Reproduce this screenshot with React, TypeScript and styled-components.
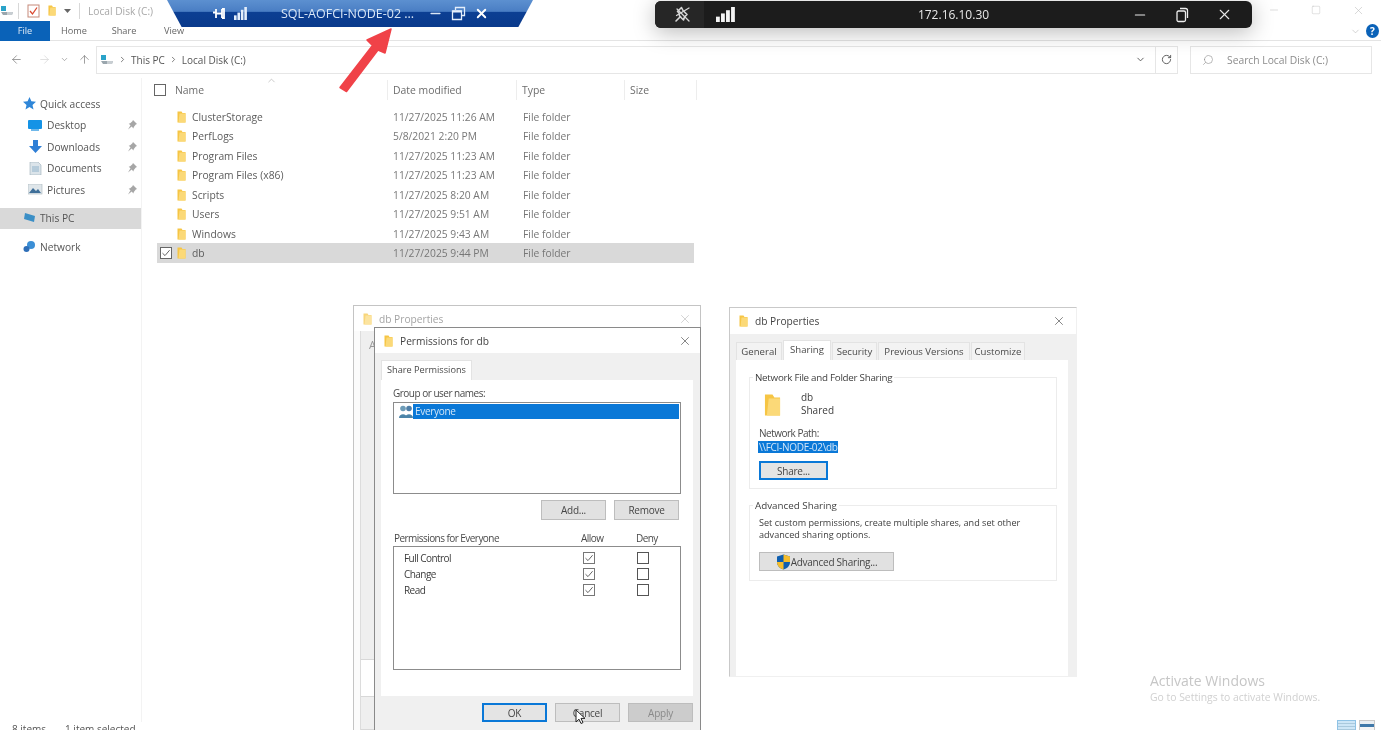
import React from 'react';
import styled, { createGlobalStyle } from 'styled-components';
import { ArrowLeft, ArrowRight, ArrowUp, ChevronDown, ChevronRight, ChevronUp, Minus, RotateCw, Search, Square, X } from 'lucide-react';

const GlobalStyle = createGlobalStyle`
  html, body { margin: 0; padding: 0; background: #fff; }
  * { box-sizing: border-box; }
`;

const UI_FONT = `'Open Sans', 'Noto Sans', sans-serif`;

const Page = styled.div`
  position: relative;
  width: 1381px;
  height: 730px;
  overflow: hidden;
  background: #fff;
  color: #4a4a4a;
  font-family: ${UI_FONT};
  font-size: 11px;
  display: flex;
  flex-direction: column;
  filter: blur(0.4px);
`;

const TitleBar = styled.div`
  height: 21px;
  display: flex;
  align-items: center;
  gap: 8px;
  color: #a8a8a8;
  font-size: 10.2px;
`;

const TitleDrive = styled.span`
  display: flex;
  margin-right: -4px;
`;

const VRule = styled.span`
  width: 1px;
  height: 16px;
  background: #d8d8d8;
`;

const Ribbon = styled.div`
  height: 20px;
  display: flex;
  align-items: center;
  border-bottom: 1px solid #e4e4e4;
  font-size: 9.2px;
  color: #666;
`;

const FileTab = styled.div`
  width: 50px;
  height: 20px;
  background: #0a62b8;
  color: #dfeaf6;
  display: flex;
  align-items: center;
  justify-content: center;
`;

const RibbonTabs = styled.div`
  display: flex;
  margin-left: -1px;
`;

const RibbonTab = styled.div`
  width: 50px;
  text-align: center;
`;

const AddressRow = styled.div`
  height: 37px;
  display: flex;
  align-items: center;
  padding: 4px 9px 4px 10px;
  color: #777;
`;

const NavButtons = styled.div`
  width: 86px;
  display: grid;
  grid-template-columns: 28px 22px 18px 1fr;
  align-items: center;
`;

const AddressBox = styled.div`
  width: 1082px;
  height: 28px;
  border: 1px solid #e6e6e6;
  display: flex;
  align-items: center;
  padding-left: 3px;
  gap: 4px;
  color: #555;
  font-size: 10px;
`;

const AddressSpacer = styled.div`
  flex: 1;
`;

const AddressEnd = styled.div`
  width: 22px;
  height: 100%;
  border-left: 1px solid #e6e6e6;
  display: flex;
  align-items: center;
  justify-content: center;
  margin-left: 5px;
`;

const SearchBox = styled.div`
  width: 182px;
  height: 28px;
  margin-left: 12px;
  border: 1px solid #e6e6e6;
  display: flex;
  align-items: center;
  gap: 13px;
  padding-left: 11px;
  color: #8c8c8c;
  font-size: 10.3px;
`;

const Body = styled.div`
  flex: 1;
  display: flex;
  min-height: 0;
`;

const Sidebar = styled.div`
  width: 142px;
  padding-top: 15px;
  border-right: 1px solid #f3f3f3;
`;

const NavItem = styled.div<{ $level?: number; $active?: boolean; $gap?: number }>`
  height: ${({ $active, $gap }) => ($active || $gap ? '21px' : '21.5px')};
  margin-top: ${({ $gap }) => $gap || 0}px;
  padding-left: ${({ $level }) => ($level ? 28 : 23)}px;
  padding-right: 4px;
  background: ${({ $active }) => ($active ? '#d9d9d9' : 'transparent')};
  display: flex;
  align-items: center;
  gap: 4px;
  font-size: 10.2px;
  color: #555;
`;

const NavLabel = styled.span`
  flex: 1;
`;

const Main = styled.div`
  flex: 1;
  padding: 2px 0 0 15px;
`;

const HeaderRow = styled.div`
  width: 540px;
  height: 20px;
  display: grid;
  grid-template-columns: 231px 129px 108px 72px;
  margin-bottom: 7.3px;
  color: #6d6d6d;
  font-size: 10.4px;
`;

const HeaderCell = styled.div<{ $first?: boolean }>`
  position: relative;
  display: flex;
  align-items: center;
  gap: 9px;
  padding-left: ${({ $first }) => ($first ? 0 : 5)}px;
  margin-left: ${({ $first }) => ($first ? -3 : 0)}px;
  border-right: 1px solid #ededed;
`;

const SortCaret = styled.span`
  position: absolute;
  left: 112px;
  top: -5px;
  color: #a8a8a8;
  display: flex;
`;

const Box = styled.span<{ $size?: number; $color?: string }>`
  width: ${({ $size }) => $size || 12}px;
  height: ${({ $size }) => $size || 12}px;
  border: 1px solid ${({ $color }) => $color || '#777'};
  background: #fff;
  display: inline-flex;
  align-items: center;
  justify-content: center;
  flex: none;
`;

const Row = styled.div<{ $selected?: boolean }>`
  width: 537px;
  height: 19.43px;
  display: grid;
  grid-template-columns: 20px 15px 201px 130px 1fr;
  align-items: center;
  background: ${({ $selected }) => ($selected ? '#d9d9d9' : 'transparent')};
  color: #5c5c5c;
  font-size: 10.3px;
`;

const RowCheck = styled.div`
  padding-left: 3px;
  display: flex;
`;

const Muted = styled.span`
  color: #777;
  font-size: 10.3px;
`;

const StatusBar = styled.div`
  height: 8px;
  display: flex;
  justify-content: space-between;
  padding: 0 6px 0 12px;
  font-size: 10px;
  color: #555;
`;

const StatusText = styled.div`
  display: flex;
  gap: 19px;
`;

const ViewIcons = styled.div`
  display: flex;
  gap: 3px;
  margin-top: -2px;
`;

const ViewIcon = styled.span<{ $on?: boolean }>`
  width: ${({ $on }) => ($on ? 19 : 16)}px;
  height: 14px;
  background: ${({ $on }) =>
    $on
      ? 'repeating-linear-gradient(#cde6f7 0 2px, #a9c9dd 2px 3px)'
      : 'linear-gradient(#e9eef2 0 3px, #3f78a8 3px 6px, #f4f4f4 6px)'};
  border: 1px solid ${({ $on }) => ($on ? '#8fc3e6' : '#c9c9c9')};
`;

/* overlays on top of the explorer */
const BlueBar = styled.div`
  position: absolute;
  left: 167px;
  top: 0;
  width: 366px;
  height: 27px;
  clip-path: polygon(0 0, 100% 0, 96% 100%, 4% 100%);
  background: linear-gradient(#5c90d0 0%, #4a7ec4 42%, #0c3f93 46%, #0a3a8c 100%);
  color: #d9e6f6;
  display: grid;
  grid-template-columns: 114px 137px 1fr;
  align-items: center;
  font-size: 12.5px;
`;

const BlueLeft = styled.div`
  display: flex;
  align-items: center;
  gap: 9px;
  padding-left: 46px;
`;

const BlueTitle = styled.div`
  white-space: nowrap;
`;

const BlueRight = styled.div`
  display: flex;
  align-items: center;
  gap: 8px;
  padding-left: 10px;
`;

const DarkBar = styled.div`
  position: absolute;
  left: 655px;
  top: 1px;
  width: 597px;
  height: 27px;
  border-radius: 6px;
  background: #1c1c1c;
  box-shadow: 0 4px 22px rgba(0, 0, 0, 0.28);
  color: #e8e8e8;
  display: grid;
  grid-template-columns: 1fr auto 1fr;
  align-items: center;
  font-size: 12px;
`;

const DarkLeft = styled.div`
  height: 100%;
  display: flex;
  align-items: center;
  gap: 12px;
`;

const PinCell = styled.div`
  width: 49px;
  height: 100%;
  padding-left: 6px;
  background: #262626;
  border-radius: 6px 0 0 6px;
  display: flex;
  align-items: center;
  justify-content: center;
`;

const DarkRight = styled.div`
  display: flex;
  align-items: center;
  justify-content: flex-end;
  gap: 26px;
  padding-right: 19px;
`;

const WindowControls = styled.div`
  position: absolute;
  right: 16px;
  top: 4px;
  display: flex;
  gap: 31px;
  color: #b9b9b9;
`;

const HelpGroup = styled.div`
  position: absolute;
  right: 2px;
  top: 24px;
  display: flex;
  align-items: center;
  gap: 5px;
  color: #b0b0b0;
`;

const HelpDot = styled.span`
  width: 13px;
  height: 14px;
  border-radius: 50%;
  background: #0a62b8;
  color: #fff;
  font-size: 10px;
  font-weight: 700;
  display: flex;
  align-items: center;
  justify-content: center;
`;

const ArrowMark = styled.svg`
  position: absolute;
  left: 334px;
  top: 24px;
`;

const Activation = styled.div`
  position: absolute;
  left: 1150px;
  top: 672px;
  color: #c6c6c6;
  font-size: 14px;
  line-height: 18px;
`;

const ActivationHint = styled.div`
  font-size: 10.4px;
  line-height: 15px;
  color: #d0d0d0;
`;

const Dialog = styled.div<{ $x: number; $y: number; $w: number; $h: number; $edge: string; $open?: boolean }>`
  position: absolute;
  left: ${({ $x }) => $x}px;
  top: ${({ $y }) => $y}px;
  width: ${({ $w }) => $w}px;
  height: ${({ $h }) => $h}px;
  border: 1px solid ${({ $edge }) => $edge};
  border-right-color: ${({ $open, $edge }) => ($open ? 'transparent' : $edge)};
  border-bottom-color: ${({ $open, $edge }) => ($open ? 'transparent' : $edge)};
  background: #f0f0f0;
  display: flex;
  flex-direction: column;
  color: #3c3c3c;
  font-size: 10px;
`;

const DialogTitle = styled.div<{ $h: number; $dim?: boolean; $pad?: number }>`
  height: ${({ $h }) => $h}px;
  flex: none;
  background: #fff;
  display: flex;
  align-items: center;
  gap: 7px;
  padding: 0 ${({ $pad }) => $pad || 8}px 0 9px;
  font-size: 10.2px;
  color: ${({ $dim }) => ($dim ? '#a4a4a4' : '#444')};
`;

const TitleText = styled.span`
  flex: 1;
`;

const BackStrip = styled.div`
  flex: 1;
  display: flex;
  padding-left: 6px;
  background: #fbfbfb;
`;

const BackPanel = styled.div`
  width: 15px;
  height: 100%;
  display: flex;
  flex-direction: column;
  border-left: 1px solid #dcdcdc;
`;

const BackPiece = styled.div<{ $h: number; $white?: boolean }>`
  height: ${({ $h }) => $h}px;
  flex: none;
  background: ${({ $white }) => ($white ? '#fff' : '#efefef')};
  border-bottom: 1px solid #d8d8d8;
  padding: 6px 0 0 8px;
  color: #999;
  font-size: 11px;
`;

const TabStrip = styled.div<{ $pad: number; $top: number }>`
  display: flex;
  align-items: flex-end;
  padding: ${({ $top }) => $top}px 0 0 ${({ $pad }) => $pad}px;
  flex: none;
`;

const Tab = styled.div<{ $w: number; $on?: boolean; $size?: number }>`
  width: ${({ $w }) => $w}px;
  height: ${({ $on }) => ($on ? 20 : 18)}px;
  margin-right: 1px;
  background: ${({ $on }) => ($on ? '#fff' : '#f3f3f3')};
  border: 1px solid #e3e3e3;
  border-bottom: none;
  display: flex;
  align-items: center;
  justify-content: center;
  font-size: ${({ $size }) => $size || 9.6}px;
  color: #4a4a4a;
  padding-bottom: ${({ $on }) => ($on ? 3 : 0)}px;
`;

const TabPanel = styled.div<{ $l: number; $r: number; $p: string; $h?: number }>`
  flex: ${({ $h }) => ($h ? 'none' : 1)};
  height: ${({ $h }) => ($h ? `${$h}px` : 'auto')};
  margin: 0 ${({ $r }) => $r}px 0 ${({ $l }) => $l}px;
  padding: ${({ $p }) => $p};
  background: #fff;
  display: flex;
  flex-direction: column;
  min-height: 0;
`;

const FieldLabel = styled.div<{ $m?: number; $top?: number; $track?: number }>`
  line-height: 12px;
  margin-top: ${({ $top }) => $top || 0}px;
  margin-bottom: ${({ $m }) => $m || 0}px;
  letter-spacing: ${({ $track }) => $track ?? -0.5}px;
  font-size: 10px;
  color: #4a4a4a;
`;

const ListBox = styled.div<{ $h: number }>`
  width: 288px;
  height: ${({ $h }) => $h}px;
  flex: none;
  border: 1px solid #8c8c8c;
  background: #fff;
`;

const ListRow = styled.div`
  display: flex;
  align-items: center;
  padding: 1px 0 0 5px;
`;

const ListSelection = styled.div`
  flex: 1;
  height: 15px;
  margin-right: 1px;
  padding-left: 2px;
  background: #0a78d7;
  color: #d3e6f8;
  line-height: 15px;
  letter-spacing: -0.3px;
`;

const ButtonRow = styled.div<{ $top: number }>`
  display: flex;
  justify-content: flex-end;
  gap: 8px;
  margin-top: ${({ $top }) => $top}px;
  padding-right: 3px;
`;

const Btn = styled.div<{ $w: number; $h?: number; $focus?: boolean; $off?: boolean }>`
  width: ${({ $w }) => $w}px;
  height: ${({ $h }) => $h || 19}px;
  flex: none;
  background: ${({ $off, $focus }) => ($off ? '#cccccc' : $focus ? '#e4e4e4' : '#e1e1e1')};
  border: ${({ $focus }) => ($focus ? '2px solid #0a78d7' : '1px solid #bdbdbd')};
  color: ${({ $off }) => ($off ? '#8a8a8a' : '#454545')};
  display: flex;
  align-items: center;
  justify-content: center;
  font-size: 10px;
  letter-spacing: -0.25px;
`;

const PermHead = styled.div`
  display: grid;
  grid-template-columns: 187px 55px 1fr;
  margin-top: 12px;
  margin-bottom: 2px;
  padding-left: 1px;
  line-height: 12px;
  letter-spacing: -0.55px;
  color: #4a4a4a;
`;

const PermBox = styled(ListBox)`
  padding: 3px 0 0 10px;
`;

const PermRow = styled.div`
  height: 16px;
  display: grid;
  grid-template-columns: 179px 54px 1fr;
  align-items: center;
  letter-spacing: -0.55px;
`;

const DialogButtons = styled.div`
  flex: none;
  height: 33px;
  display: flex;
  justify-content: flex-end;
  gap: 8px;
  padding: 7px 7px 0 0;
`;

const Cursor = styled.svg`
  position: absolute;
  left: 575px;
  top: 709px;
`;

const GroupBox = styled.div<{ $h: number; $m: number }>`
  position: relative;
  height: ${({ $h }) => $h}px;
  margin-bottom: ${({ $m }) => $m}px;
  flex: none;
  border: 1px solid #ececec;
  padding: 0 9px;
`;

const Legend = styled.div<{ $tight?: boolean }>`
  position: absolute;
  left: 3px;
  top: -7px;
  padding: 0 2px;
  background: #fff;
  line-height: 13px;
  font-size: 9.8px;
  letter-spacing: ${({ $tight }) => ($tight ? -0.27 : 0)}px;
  color: #3f3f3f;
`;

const ShareHead = styled.div`
  display: flex;
  gap: 20px;
  padding: 15px 0 0 5px;
  height: 48px;
`;

const ShareName = styled.div`
  line-height: 13px;
  margin-top: -2px;
  font-size: 10px;
`;

const PathSelect = styled.span`
  display: inline-block;
  height: 12px;
  margin-left: -1px;
  padding-left: 1px;
  line-height: 12px;
  background: #0a78d7;
  color: #d3e6f8;
  letter-spacing: -0.3px;
`;

const PathLine = styled.div`
  margin-bottom: 8px;
  font-size: 10px;
  display: flex;
`;

const Paragraph = styled.div`
  padding-top: 11px;
  margin-bottom: 11px;
  line-height: 12px;
  font-size: 9.1px;
`;

const Folder: React.FC<{ w?: number; h?: number; dim?: boolean }> = ({ w = 9, h = 12, dim }) => (
  <svg width={w} height={h} viewBox="0 0 9 12" style={{ opacity: dim ? 0.7 : 1, flex: 'none' }}>
    <path d="M0.500 0.500H4.500L5.500 2H8.500V11.500H0.500Z" fill="#f6c544" />
    <path d="M2.500 2.500H8.500V11.500H1.500Z" fill="#fbd978" />
  </svg>
);

const DriveIcon: React.FC = () => (
  <svg width="14" height="12" viewBox="0 0 14 12" style={{ flex: 'none' }}>
    <path d="M1 1h5v5H1z" fill="#2aa3c9" />
    <path d="M1 7h12l-1 3H3z" fill="#9aa6ad" />
    <path d="M7 7h6l-1 3H7z" fill="#c8ced2" />
  </svg>
);

const Signal: React.FC<{ w: number; h: number; color: string }> = ({ w, h, color }) => (
  <svg width={w} height={h} viewBox="0 0 14 14" preserveAspectRatio="none">
    <rect x="0" y="9" width="2.800" height="5" fill={color} />
    <rect x="3.700" y="6" width="2.800" height="8" fill={color} />
    <rect x="7.400" y="3" width="2.800" height="11" fill={color} />
    <rect x="11.100" y="0" width="2.800" height="14" fill={color} />
  </svg>
);

const SlashedPin: React.FC = () => (
  <svg width="17" height="17" viewBox="0 0 17 17" fill="none" stroke="#d6d6d6" strokeWidth="1.600" strokeLinecap="round" strokeLinejoin="round">
    <path d="M7.500 1.500 3.500 5.500 5 6.500 5.500 10 9.500 14 10.500 11 13 8.500 9 4.500Z" />
    <path d="M2 15 6.500 10.500" />
    <path d="M15 2 2.500 9.500M3 3 15 15" strokeWidth="1.300" />
  </svg>
);

const Tick: React.FC<{ color?: string }> = ({ color = '#666' }) => (
  <svg width="10" height="10" viewBox="0 0 10 10">
    <path d="M1.500 5.200 4 7.600 8.600 2.200" fill="none" stroke={color} strokeWidth="1" />
  </svg>
);

const Shield: React.FC = () => (
  <svg width="15" height="16" viewBox="0 0 15 16" style={{ flex: 'none' }}>
    <path d="M7.500 0.500 14 2.500V8c0 4-3 6.500-6.500 7.500C4 14.500 1 12 1 8V2.500Z" fill="#0f5fb0" />
    <path d="M7.500 0.500 14 2.500V8H7.500ZM7.500 8V15.500C4 14.500 1 12 1 8Z" fill="#f5bd2c" />
  </svg>
);

const navItems = [
  { label: 'Desktop', icon: <svg width="15" height="11" viewBox="0 0 15 11"><rect width="14" height="9" rx="1" fill="#1593e6" /><rect x="3" y="9" width="8" height="2" fill="#6fb8ea" /></svg> },
  { label: 'Downloads', icon: <svg width="15" height="13" viewBox="0 0 15 13"><path d="M5 0h5v6h4L7.500 13 1 6h4z" fill="#2f7fd6" /></svg> },
  { label: 'Documents', icon: <svg width="15" height="13" viewBox="0 0 15 13"><path d="M2 0h8l3 3v10H2z" fill="#dbe4ea" stroke="#9fb0ba" strokeWidth=".6" /><path d="M4 5h7M4 7h7M4 9h7" stroke="#7fa6c4" strokeWidth=".8" /></svg> },
  { label: 'Pictures', icon: <svg width="15" height="11" viewBox="0 0 15 11"><rect width="14" height="10" fill="#dfe6ea" stroke="#a9b5bb" strokeWidth=".6" /><path d="M1 9 5 4l3 3 2-2 3 4z" fill="#3f6f99" /></svg> },
];

const files = [
  { name: 'ClusterStorage', date: '11/27/2025 11:26 AM' },
  { name: 'PerfLogs', date: '5/8/2021 2:20 PM' },
  { name: 'Program Files', date: '11/27/2025 11:23 AM' },
  { name: 'Program Files (x86)', date: '11/27/2025 11:23 AM' },
  { name: 'Scripts', date: '11/27/2025 8:20 AM' },
  { name: 'Users', date: '11/27/2025 9:51 AM' },
  { name: 'Windows', date: '11/27/2025 9:43 AM' },
  { name: 'db', date: '11/27/2025 9:44 PM', selected: true },
];

const perms = ['Full Control', 'Change', 'Read'];

const sharingTabs = [
  { label: 'General', w: 46 },
  { label: 'Sharing', w: 48, on: true },
  { label: 'Security', w: 45 },
  { label: 'Previous Versions', w: 92 },
  { label: 'Customize', w: 54 },
];

const App: React.FC = () => (
  <Page>
    <GlobalStyle />
    <TitleBar>
      <TitleDrive><DriveIcon /></TitleDrive>
      <VRule />
      <svg width="13" height="14" viewBox="0 0 13 14"><rect x="1" y="1" width="11" height="12" fill="#fff" stroke="#c58a7a" /><path d="M3 7l2.500 3L10 3.500" fill="none" stroke="#d9482f" strokeWidth="1.300" /></svg>
      <Folder w={8} h={13} />
      <svg width="7" height="7" viewBox="0 0 7 7"><path d="M0 2h7L3.500 6z" fill="#666" /></svg>
      <VRule />
      <span>Local Disk (C:)</span>
    </TitleBar>
    <Ribbon>
      <FileTab>File</FileTab>
      <RibbonTabs>
        <RibbonTab>Home</RibbonTab>
        <RibbonTab>Share</RibbonTab>
        <RibbonTab>View</RibbonTab>
      </RibbonTabs>
    </Ribbon>
    <AddressRow>
      <NavButtons>
        <ArrowLeft size={13} strokeWidth={1.3} />
        <ArrowRight size={13} strokeWidth={1.3} color="#d4d4d4" />
        <ChevronDown size={9} strokeWidth={1.5} />
        <ArrowUp size={13} strokeWidth={1.3} />
      </NavButtons>
      <AddressBox>
        <DriveIcon />
        <ChevronRight size={9} />
        <span>This PC</span>
        <ChevronRight size={9} />
        <span>Local Disk (C:)</span>
        <AddressSpacer />
        <ChevronDown size={11} />
        <AddressEnd><RotateCw size={11} /></AddressEnd>
      </AddressBox>
      <SearchBox>
        <Search size={12} strokeWidth={1.2} style={{ transform: 'scaleX(-1)' }} />
        <span>Search Local Disk (C:)</span>
      </SearchBox>
    </AddressRow>
    <Body>
      <Sidebar>
        <NavItem>
          <svg width="13" height="13" viewBox="0 0 13 13"><path d="M6.500 0 8.400 4.300 13 4.800 9.500 7.900 10.500 12.500 6.500 10.100 2.500 12.500 3.500 7.900 0 4.800 4.600 4.300z" fill="#2f86d8" /></svg>
          <NavLabel>Quick access</NavLabel>
        </NavItem>
        {navItems.map((n) => (
          <NavItem key={n.label} $level={1}>
            {n.icon}
            <NavLabel>{n.label}</NavLabel>
            <svg width="10" height="10" viewBox="0 0 10 10"><path d="M6 0 10 4 8.800 4.600 6.800 7 6.400 8.400 4.700 6.500 1 9.500 3.500 5.300 1.700 3.700 3.200 3.300 5.400 1.200z" fill="#a6a6a6" /></svg>
          </NavItem>
        ))}
        <NavItem $active $gap={7}>
          <svg width="13" height="10" viewBox="0 0 13 10"><path d="M2 0 12 3 11 9 1 6z" fill="#3b8fc6" /></svg>
          <NavLabel>This PC</NavLabel>
        </NavItem>
        <NavItem $gap={8}>
          <svg width="13" height="12" viewBox="0 0 13 12"><circle cx="8" cy="4" r="4" fill="#3b8fd6" /><circle cx="3.500" cy="8" r="3" fill="#2f6fb8" /></svg>
          <NavLabel>Network</NavLabel>
        </NavItem>
      </Sidebar>
      <Main>
        <HeaderRow>
          <HeaderCell $first>
            <Box $color="#666" />
            <span>Name</span>
            <SortCaret><ChevronUp size={11} strokeWidth={1.3} /></SortCaret>
          </HeaderCell>
          <HeaderCell>Date modified</HeaderCell>
          <HeaderCell>Type</HeaderCell>
          <HeaderCell>Size</HeaderCell>
        </HeaderRow>
        {files.map((f) => (
          <Row key={f.name} $selected={f.selected}>
            <RowCheck>{f.selected && <Box $color="#666"><Tick /></Box>}</RowCheck>
            <Folder />
            <span>{f.name}</span>
            <Muted>{f.date}</Muted>
            <Muted>File folder</Muted>
          </Row>
        ))}
      </Main>
    </Body>
    <StatusBar>
      <StatusText>
        <span>8 items</span>
        <span>1 item selected</span>
      </StatusText>
      <ViewIcons>
        <ViewIcon $on />
        <ViewIcon />
      </ViewIcons>
    </StatusBar>

    <WindowControls>
      <Minus size={12} strokeWidth={1} />
      <Square size={10} strokeWidth={1} style={{ marginTop: 1 }} />
      <X size={13} strokeWidth={1} />
    </WindowControls>
    <HelpGroup>
      <ChevronDown size={11} strokeWidth={1.2} />
      <HelpDot>?</HelpDot>
    </HelpGroup>

    <BlueBar>
      <BlueLeft>
        <svg width="12" height="11" viewBox="0 0 12 11"><path d="M0 4.500h3M3 1v9M3 5.500h6M9 1v9M9 1h2v9H9" fill="none" stroke="#fff" strokeWidth="1.800" /></svg>
        <Signal w={13} h={13} color="#e4eefb" />
      </BlueLeft>
      <BlueTitle>SQL-AOFCI-NODE-02 ...</BlueTitle>
      <BlueRight>
        <Minus size={15} strokeWidth={2.4} />
        <svg width="15" height="15" viewBox="0 0 15 15"><path d="M4.500 4V1.500h9v8H11M1.500 5h9v8.500h-9z" fill="none" stroke="#e4eefb" strokeWidth="1.300" /><path d="M1.500 5.500h9" stroke="#e4eefb" strokeWidth="2" /></svg>
        <X size={15} strokeWidth={3} color="#fff" />
      </BlueRight>
    </BlueBar>

    <DarkBar>
      <DarkLeft>
        <PinCell><SlashedPin /></PinCell>
        <Signal w={19} h={15} color="#f4f4f4" />
      </DarkLeft>
      <span>172.16.10.30</span>
      <DarkRight>
        <Minus size={16} strokeWidth={1.6} />
        <svg width="16" height="16" viewBox="0 0 16 16"><rect x="3" y="4" width="8.500" height="10.500" rx="1.500" fill="none" stroke="#eee" strokeWidth="1.300" /><path d="M6 1.500h5.500a2 2 0 0 1 2 2V11" fill="none" stroke="#eee" strokeWidth="1.300" /></svg>
        <X size={17} strokeWidth={1.6} />
      </DarkRight>
    </DarkBar>

    <ArrowMark width="64" height="72" viewBox="0 0 64 72">
      <path d="M57 5 33 16 38.500 21.500 6 63.500 12.500 67.500 44 26 51 29z" fill="#f04248" stroke="#f04248" strokeWidth="1.500" strokeLinejoin="round" />
    </ArrowMark>

    <Dialog $x={353} $y={305} $w={348} $h={440} $edge="#c4c4c4">
      <DialogTitle $h={25} $dim>
        <Folder dim />
        <TitleText>db Properties</TitleText>
        <X size={14} strokeWidth={1} color="#b5b5b5" />
      </DialogTitle>
      <BackStrip>
        <BackPanel>
          <BackPiece $h={329}>A</BackPiece>
          <BackPiece $h={37} $white />
          <BackPiece $h={33} />
        </BackPanel>
      </BackStrip>
    </Dialog>

    <Dialog $x={374} $y={327} $w={327} $h={420} $edge="#8a8a8a">
      <DialogTitle $h={25}>
        <Folder />
        <TitleText>Permissions for db</TitleText>
        <X size={14} strokeWidth={1.1} color="#444" />
      </DialogTitle>
      <TabStrip $pad={6} $top={7}>
        <Tab $w={91} $on $size={9.2}>Share Permissions</Tab>
      </TabStrip>
      <TabPanel $l={6} $r={7} $p="7px 11px 0 12px" $h={316}>
        <FieldLabel $m={3}>Group or user names:</FieldLabel>
        <ListBox $h={92}>
          <ListRow>
            <svg width="14" height="13" viewBox="0 0 14 13" style={{ flex: 'none' }}><circle cx="4" cy="3.500" r="2.800" fill="#6d9cb8" /><circle cx="10" cy="3.500" r="2.800" fill="#4f7fa8" /><path d="M0 13c0-5 8-5 8 0zM6 13c0-5 8-5 8 0z" fill="#4b84a8" /></svg>
            <ListSelection>Everyone</ListSelection>
          </ListRow>
        </ListBox>
        <ButtonRow $top={6}>
          <Btn $w={65} $h={20}>Add...</Btn>
          <Btn $w={65} $h={20}>Remove</Btn>
        </ButtonRow>
        <PermHead>
          <span>Permissions for Everyone</span>
          <span>Allow</span>
          <span>Deny</span>
        </PermHead>
        <PermBox $h={124}>
          {perms.map((p) => (
            <PermRow key={p}>
              <span>{p}</span>
              <Box $color="#777"><Tick /></Box>
              <Box $color="#555" />
            </PermRow>
          ))}
        </PermBox>
      </TabPanel>
      <DialogButtons>
        <Btn $w={65} $focus>OK</Btn>
        <Btn $w={65}>Cancel</Btn>
        <Btn $w={65} $off>Apply</Btn>
      </DialogButtons>
    </Dialog>

    <Cursor width="12" height="16" viewBox="0 0 12 16">
      <path d="M1 1v12l3-2.800 2 4.300 2-.9-2-4.200h4z" fill="#fff" stroke="#222" strokeWidth="1" />
    </Cursor>

    <Dialog $x={729} $y={307} $w={348} $h={370} $edge="#c9c9c9" $open>
      <DialogTitle $h={26} $pad={10}>
        <Folder />
        <TitleText>db Properties</TitleText>
        <X size={14} strokeWidth={1.1} color="#444" />
      </DialogTitle>
      <TabStrip $pad={6} $top={6}>
        {sharingTabs.map((t) => (
          <Tab key={t.label} $w={t.w} $on={t.on}>{t.label}</Tab>
        ))}
      </TabStrip>
      <TabPanel $l={6} $r={8} $p="17px 11px 0 13px">
        <GroupBox $h={112} $m={16}>
          <Legend $tight>Network File and Folder Sharing</Legend>
          <ShareHead>
            <Folder w={17} h={24} />
            <ShareName>
              <div>db</div>
              <div>Shared</div>
            </ShareName>
          </ShareHead>
          <FieldLabel $m={2} $top={1}>Network Path:</FieldLabel>
          <PathLine><PathSelect>\\FCI-NODE-02\db</PathSelect></PathLine>
          <Btn $w={69} $focus>Share...</Btn>
        </GroupBox>
        <GroupBox $h={76} $m={0}>
          <Legend>Advanced Sharing</Legend>
          <Paragraph>
            Set custom permissions, create multiple shares, and set other
            <br />
            advanced sharing options.
          </Paragraph>
          <Btn $w={135}><Shield />Advanced Sharing...</Btn>
        </GroupBox>
      </TabPanel>
    </Dialog>

    <Activation>
      Activate Windows
      <ActivationHint>Go to Settings to activate Windows.</ActivationHint>
    </Activation>
  </Page>
);

export default App;
